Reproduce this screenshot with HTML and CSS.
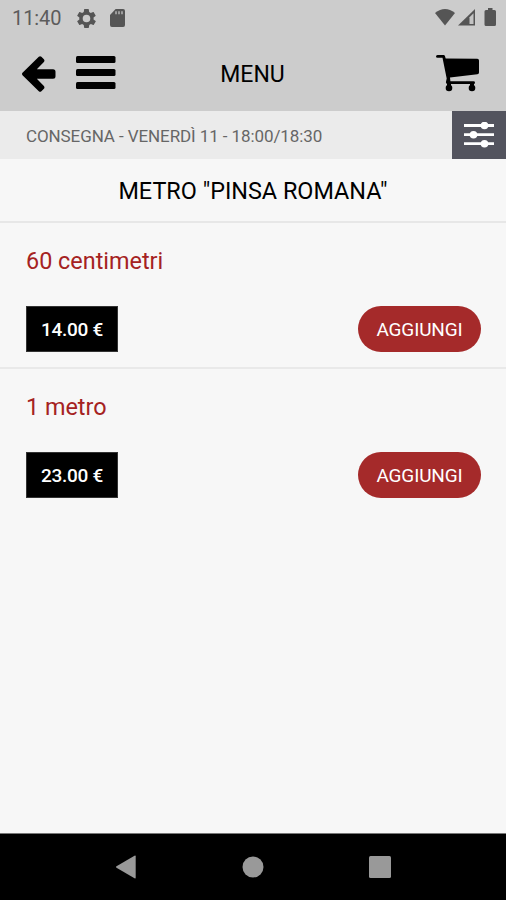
FILE: index.html
```html
<!DOCTYPE html>
<html lang="it">
<head>
<meta charset="utf-8">
<title>Menu</title>
<link rel="stylesheet" href="styles.css">
</head>
<body>
<header class="header">
  <div class="status">
    <span class="clock">11:40</span>
    <svg class="gear" width="19" height="19" viewBox="2 2 20 20"><path d="M19.4 13c0-.3.1-.6.1-1s0-.7-.1-1l2.1-1.600c.2-.1.2-.4.1-.6l-2-3.500c-.1-.2-.4-.3-.6-.2l-2.500 1c-.5-.4-1.100-.7-1.700-1l-.4-2.600c0-.3-.2-.5-.4-.5h-4c-.3 0-.5.200-.5.4l-.4 2.700c-.6.200-1.100.6-1.700 1l-2.500-1c-.2-.1-.5 0-.6.2l-2 3.500c-.1.2-.1.5.1.6l2.100 1.600c0 .3-.1.6-.1 1s0 .7.1 1l-2.100 1.600c-.2.1-.2.4-.1.6l2 3.500c.1.200.4.300.6.200l2.500-1c.5.4 1.100.7 1.700 1l.4 2.600c0 .3.200.5.5.5h4c.300 0 .5-.2.5-.4l.4-2.700c.6-.2 1.100-.6 1.700-1l2.500 1c.2.1.5 0 .6-.2l2-3.500c.1-.2.1-.5-.1-.6zM12 16a4 4 0 1 1 0-8 4 4 0 0 1 0 8z"/></svg>
    <svg class="sd" width="15" height="18" viewBox="0 0 16 18" preserveAspectRatio="none"><path d="M6 0h8q2 0 2 2v14q0 2-2 2H2q-2 0-2-2V6z"/><path class="notch" d="M5.500 2.200h1.800v3H5.500zM8.700 2.200h1.800v3H8.700zM11.900 2.200h1.800v3h-1.800z"/></svg>
    <svg class="signals" width="62" height="20" viewBox="0 0 62 20"><path d="M0 5Q10-3 20 5L10 17.500z"/><path d="M23 17.500L40 1v16.500z"/><path class="faint" d="M34.500 9.200L38.500 5.200V16h-4z"/><path d="M53 0h4.500v2h2q1.500 0 1.500 1.500v13q0 1.500-1.500 1.500h-8.500q-1.500 0-1.500-1.500v-13Q49.500 2 51 2H53z"/></svg>
  </div>
  <div class="toolbar">
    <svg class="back" width="34" height="36" viewBox="0 0 34 36"><path d="M.5 16.800L16.800.8q1.300-1.200 2.600 0l2.500 2.500q1.100 1.300 0 2.600L14.800 13.300H31q2.500 0 2.500 2.500v4.400q0 2.500-2.500 2.500H14.800l7.100 7.400q1.100 1.300 0 2.600L19.400 35.200q-1.300 1.200-2.600 0L.5 19.200Q-.5 18 .5 16.800z"/></svg>
    <svg class="burger" width="40" height="34" viewBox="0 0 40 34"><rect width="39.500" height="7" rx="1.500"/><rect y="13" width="39.500" height="7" rx="1.500"/><rect y="26" width="39.500" height="7" rx="1.500"/></svg>
    <h1 class="title"><span>MENU</span></h1>
    <svg class="cart" width="43" height="37" viewBox="0 0 43 37"><path d="M1.500 0H7.500q1.200 0 1.500 1.200L9.700 3.500 41.300 3.800q1.700.1 1.700 1.700v12q0 1.600-1.600 1.800L14 22.500l.4 3.800H37.500q1.500 0 1.500 1.400T37.500 29H11.500q-1.500-.2-1.600-1.800l.8-3.700L6.500 2.800H1.500Q0 2.700 0 1.400T1.500 0z"/><circle cx="13" cy="33" r="3.300"/><circle cx="36" cy="33" r="3.300"/><path d="M11 28h4v4h-4zM34 28h4v4h-4z"/></svg>
  </div>
</header>
<section class="delivery">
  <span class="slot">CONSEGNA - VENERDÌ 11 - 18:00/18:30</span>
  <div class="filter"><svg width="30" height="26" viewBox="0 0 30 26"><path d="M0 3.500h30M0 12.700h30M0 21.700h30"/><circle cx="20.500" cy="3.500" r="3.800"/><circle cx="9.500" cy="12.700" r="3.800"/><circle cx="20.500" cy="21.700" r="3.800"/></svg></div>
</section>
<main class="content">
  <h2 class="category"><span>METRO "PINSA ROMANA"</span></h2>
  <article class="item">
    <h3 class="name">60 centimetri</h3>
    <div class="row"><span class="price">14.00 €</span><button class="add">AGGIUNGI</button></div>
  </article>
  <article class="item">
    <h3 class="name">1 metro</h3>
    <div class="row"><span class="price">23.00 €</span><button class="add">AGGIUNGI</button></div>
  </article>
</main>
<nav class="navbar">
  <svg width="20" height="24" viewBox="0 0 20 24"><path d="M.5 11.300L18.500.7q1.200-.5 1.200.7v21.200q0 1.200-1.200.7L.5 12.700q-1-.7 0-1.400z"/></svg>
  <svg width="22" height="22" viewBox="0 0 22 22"><circle cx="11" cy="11" r="10.500"/></svg>
  <svg width="22" height="22" viewBox="0 0 22 22"><rect width="22" height="22" rx="1.500"/></svg>
</nav>
</body>
</html>
```
FILE: styles.css
```css
* { box-sizing: border-box; }
body {
  margin: 0;
  height: 900px;
  display: flex;
  flex-direction: column;
  overflow: hidden;
  background: #f7f7f7;
  color: #000;
  font-family: Roboto, "Liberation Sans", sans-serif;
}
h1, h2, h3 { margin: 0; font-weight: 400; }
svg { display: block; flex: none; }
.header { height: 111px; background: #ccc; }
.status {
  height: 36px;
  display: flex;
  align-items: center;
  padding: 0 9px 0 12px;
  color: #5c5c5c;
  fill: #555;
}
.clock { width: 65px; font-size: 20px; letter-spacing: -.1px; }
.gear { margin-right: 14px; fill-rule: evenodd; }
.notch { fill: #aaa; }
.faint { fill: #c4c4c4; }
.signals { margin-left: auto; }
.toolbar {
  height: 75px;
  display: grid;
  grid-template-columns: 54px 72px 1fr 122px;
  align-items: center;
  padding: 0 27px 0 22px;
}
.burger { align-self: start; margin-top: 20px; }
.title { padding-top: 2px; text-align: center; font-size: 23px; line-height: 28px; }
.cart { justify-self: end; }
.delivery {
  height: 48px;
  display: flex;
  align-items: center;
  justify-content: space-between;
  padding-left: 26px;
  background: #ebebeb;
}
.slot { padding-top: 2px; font-size: 17px; letter-spacing: -.09px; color: #666; }
.filter {
  width: 54px;
  height: 48px;
  display: flex;
  align-items: center;
  justify-content: center;
  background: #53545e;
  fill: #fff;
  stroke: #fff;
}
.filter path { stroke-width: 2.800; }
.filter circle { stroke: none; }
.content { flex: 1; }
.category {
  height: 64px;
  border-bottom: 2px solid #e7e7e7;
  text-align: center;
  font-size: 23.400px;
  line-height: 65px;
}
.item { height: 146px; padding: 23px 25px 0 26px; }
.item:not(:last-child) { border-bottom: 2px solid #e9e9e9; }
.name { height: 60px; font-size: 23.400px; line-height: 30px; color: #a52222; }
.row { display: flex; justify-content: space-between; }
.price {
  width: 92px;
  height: 46px;
  background: #000;
  border: 1px solid #333;
  color: #fff;
  text-align: center;
  font-size: 19px;
  font-weight: 500;
  letter-spacing: -.3px;
  line-height: 46px;
}
.add {
  width: 123px;
  height: 46px;
  padding: 1px 0 0;
  border: 0;
  border-radius: 23px;
  background: #a52a2a;
  color: #fff;
  font: 400 19px/45px Roboto, "Liberation Sans", sans-serif;
  letter-spacing: -.15px;
}
.navbar {
  height: 67px;
  display: flex;
  align-items: center;
  justify-content: space-between;
  padding: 0 115px 0 116px;
  border-top: 1px solid #777;
  background: #000;
  fill: #999;
}
```
